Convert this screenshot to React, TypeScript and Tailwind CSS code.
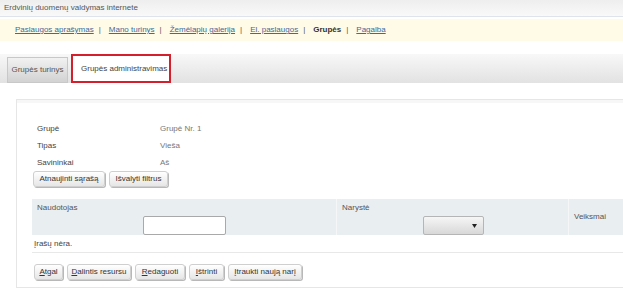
import React from "react";

const Btn = ({ children, w }: { children: React.ReactNode; w: string }) => (
  <div
    className={`${w} h-[16px] flex items-center justify-center rounded-[3px] border border-[#cfcfcf] bg-gradient-to-b from-white to-[#e6e6e6] shadow-[1px_1px_0_#b8b8b8] text-[#333] whitespace-nowrap`}
  >
    {children}
  </div>
);

const Sep = () => <span className="ml-[5px] mr-[8px] text-[#555]">|</span>;

export default function App() {
  return (
    <div className="w-[623px] h-[296px] overflow-hidden bg-white font-['Liberation_Sans',Arial,sans-serif] text-[8px] text-[#333] leading-none">
      {/* header */}
      <div className="h-[17px] pl-[4px] flex items-center bg-gradient-to-b from-[#eeeeee] to-[#f9f9f9] border-b border-[#dfe4ec] text-[#555]">
        Erdvinių duomenų valdymas internete
      </div>
      {/* nav */}
      <div className="mt-[2px] h-[22px] pl-[15px] flex items-center bg-[#fffbe6] text-[#41699a]">
        <span className="underline">Paslaugos aprašymas</span>
        <Sep />
        <span className="underline">Mano turinys</span>
        <Sep />
        <span className="underline">Žemėlapių galerija</span>
        <Sep />
        <span className="underline">El. paslaugos</span>
        <Sep />
        <span className="font-bold text-[#333]">Grupės</span>
        <Sep />
        <span className="underline">Pagalba</span>
      </div>
      {/* tabs */}
      <div className="mt-[13px] h-[29px] pl-[7px] flex items-end bg-gradient-to-b from-[#f8f8f8] to-[#e2e2e2]">
        <div className="w-[61px] h-[26px] flex items-center justify-center border border-[#c8c8c8] bg-gradient-to-b from-[#f2f2f2] to-[#d2d2d2] text-[#555]">
          Grupės turinys
        </div>
        <div className="ml-[3px] w-[100px] h-[29px] flex items-center pl-[8px] border-2 border-[#d4202c] bg-white text-[#444]">
          Grupės administravimas
        </div>
      </div>
      {/* panel */}
      <div className="mt-[16px] ml-[16px] h-[189px] border-l border-t border-b border-[#e6e6e6] bg-white flex flex-col">
        <div className="h-[3px] bg-[#f7f7f7]" />
        <div className="pt-[17px] pl-[20px] flex flex-col">
          {[
            ["Grupė", "Grupė Nr. 1"],
            ["Tipas", "Vieša"],
            ["Savininkai", "Aš"],
          ].map(([l, v]) => (
            <div key={l} className="h-[17px] flex items-center">
              <span className="w-[123px] text-[#444]">{l}</span>
              <span className="text-[#777]">{v}</span>
            </div>
          ))}
        </div>
        <div className="pl-[16px] flex gap-[4px]">
          <Btn w="w-[72px]">Atnaujinti sąrašą</Btn>
          <Btn w="w-[59px]">Išvalyti filtrus</Btn>
        </div>
        {/* table */}
        <div className="mt-[12px] ml-[15px] flex flex-col">
          <div className="h-[36px] bg-[#e9eef1] flex">
            <div className="w-[305px] border-r border-[#f4f6f8] pl-[5px] pt-[5px] relative">
              <div className="text-[#555]">Naudotojas</div>
              <div className="ml-[106px] mt-[4px] w-[83px] h-[19px] bg-white border border-[#a9a9a9] rounded-[2px]" />
            </div>
            <div className="w-[232px] border-r border-[#f4f6f8] pl-[5px] pt-[5px]">
              <div className="text-[#555]">Narystė</div>
              <div className="ml-[81px] mt-[4px] w-[61px] h-[19px] border border-[#b5b5b5] rounded-[2px] bg-gradient-to-b from-[#f6f6f6] to-[#d8d8d8] flex items-center justify-end pr-[6px]">
                <svg width="5" height="4" viewBox="0 0 5 4">
                  <path d="M0 0 L5 0 L2.5 4 Z" fill="#222" />
                </svg>
              </div>
            </div>
            <div className="flex-1 pl-[5px] flex items-center text-[#555]">Veiksmai</div>
          </div>
          <div className="h-[18px] flex items-center pl-[2px] border-b border-[#e8e8e8] text-[#444]">
            Įrašų nėra.
          </div>
        </div>
        <div className="mt-[11px] pl-[17px] flex gap-[4px]">
          <Btn w="w-[29px]"><span><u>A</u>tgal</span></Btn>
          <Btn w="w-[64px]"><span><u>D</u>alintis resursu</span></Btn>
          <Btn w="w-[50px]"><span><u>R</u>edaguoti</span></Btn>
          <Btn w="w-[35px]"><span><u>I</u>štrinti</span></Btn>
          <Btn w="w-[74px]">Įtraukti naują narį</Btn>
        </div>
      </div>
    </div>
  );
}
